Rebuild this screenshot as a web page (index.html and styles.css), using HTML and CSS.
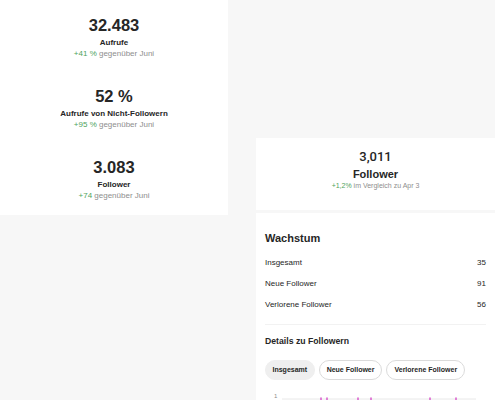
FILE: index.html
```html
<!DOCTYPE html>
<html lang="de">
<head>
<meta charset="utf-8">
<title>Statistiken</title>
<link rel="stylesheet" href="styles.css">
</head>
<body>
<div class="page">
  <section class="left">
    <div class="stat">
      <div class="stat-num">32.483</div>
      <div class="stat-label">Aufrufe</div>
      <div class="stat-delta"><span class="up">+41 %</span> gegenüber Juni</div>
    </div>
    <div class="stat">
      <div class="stat-num">52 %</div>
      <div class="stat-label">Aufrufe von Nicht-Followern</div>
      <div class="stat-delta"><span class="up">+95 %</span> gegenüber Juni</div>
    </div>
    <div class="stat">
      <div class="stat-num">3.083</div>
      <div class="stat-label">Follower</div>
      <div class="stat-delta"><span class="up">+74</span> gegenüber Juni</div>
    </div>
  </section>
  <section class="right">
    <div class="summary">
      <div class="sum-num">3,011</div>
      <div class="sum-label">Follower</div>
      <div class="sum-delta"><span class="up">+1,2%</span> im Vergleich zu Apr 3</div>
    </div>
    <div class="growth">
      <h2 class="growth-title">Wachstum</h2>
      <div class="rows">
        <div class="row"><span>Insgesamt</span><span>35</span></div>
        <div class="row"><span>Neue Follower</span><span>91</span></div>
        <div class="row"><span>Verlorene Follower</span><span>56</span></div>
      </div>
      <div class="divider"></div>
      <h3 class="details-title">Details zu Followern</h3>
      <div class="pills">
        <span class="pill pill-active">Insgesamt</span>
        <span class="pill">Neue Follower</span>
        <span class="pill">Verlorene Follower</span>
      </div>
      <div class="chart">
        <span class="axis-label">1</span>
        <svg class="chart-svg" width="200" height="7" viewBox="0 0 200 7">
          <line x1="0" y1="6" x2="194" y2="6" stroke="#e8e8e8" stroke-width="1"/>
          <rect x="38" y="4.5" width="2" height="2.5" fill="#e07fd6"/>
          <rect x="44" y="4.5" width="2" height="2.5" fill="#e07fd6"/>
          <rect x="75" y="4.5" width="2" height="2.5" fill="#e07fd6"/>
          <rect x="88" y="4.5" width="2" height="2.5" fill="#e07fd6"/>
          <rect x="147" y="4.5" width="2" height="2.5" fill="#e07fd6"/>
          <rect x="173" y="4.5" width="2" height="2.5" fill="#e07fd6"/>
        </svg>
      </div>
    </div>
  </section>
</div>
</body>
</html>
```
FILE: styles.css
```css
html, body {
  margin: 0;
  padding: 0;
}
body {
  background: #f7f7f7;
  font-family: "Liberation Sans", Arial, sans-serif;
  color: #262626;
  width: 495px;
  height: 400px;
  overflow: hidden;
}
.page {
  display: flex;
  align-items: flex-start;
}
.left {
  width: 228px;
  background: #ffffff;
  box-sizing: border-box;
  padding: 15px 0 14px;
  display: flex;
  flex-direction: column;
  gap: 27px;
  text-align: center;
}
.stat-num {
  font-size: 16.5px;
  font-weight: bold;
  line-height: 20px;
}
.stat-label {
  margin-top: 3px;
  font-size: 8px;
  font-weight: bold;
  line-height: 10px;
}
.stat-delta {
  margin-top: 1px;
  font-size: 8px;
  line-height: 10px;
  color: #8e8e8e;
}
.up {
  color: #4fa35c;
}
.right {
  margin-left: 28px;
  margin-top: 138px;
  width: 239px;
  display: flex;
  flex-direction: column;
  gap: 3px;
}
.summary {
  background: #ffffff;
  height: 72px;
  box-sizing: border-box;
  padding-top: 11px;
  text-align: center;
}
.sum-num {
  font-family: Roboto, "Liberation Sans", sans-serif;
  font-weight: 500;
  font-size: 13px;
  line-height: 16px;
}
.sum-label {
  margin-top: 2px;
  font-size: 11px;
  font-weight: bold;
  line-height: 14px;
}
.sum-delta {
  font-size: 7px;
  line-height: 9px;
  color: #8e8e8e;
}
.growth {
  background: #ffffff;
  box-sizing: border-box;
  padding: 18px 9px 0;
  height: 187px;
  overflow: hidden;
}
.growth-title {
  margin: 0;
  font-size: 11px;
  font-weight: bold;
  line-height: 14px;
}
.rows {
  margin-top: 7px;
}
.row {
  display: flex;
  justify-content: space-between;
  font-size: 8px;
  line-height: 21px;
}
.divider {
  margin-top: 9px;
  height: 1px;
  background: #f2f2f2;
}
.details-title {
  margin: 10px 0 0;
  font-size: 8.7px;
  font-weight: bold;
  line-height: 12px;
}
.pills {
  margin-top: 13px;
  display: flex;
  gap: 4px;
}
.pill {
  height: 20px;
  box-sizing: border-box;
  padding: 0 7px;
  border: 1px solid #dbdbdb;
  border-radius: 10px;
  font-size: 7px;
  font-weight: bold;
  line-height: 18px;
  background: #ffffff;
  white-space: nowrap;
}
.pill-active {
  background: #efefef;
  border-color: #efefef;
  padding: 0 6.5px;
}
.chart {
  margin-top: 13px;
  display: flex;
  align-items: flex-start;
  gap: 5px;
  padding-left: 9px;
}
.axis-label {
  font-size: 6px;
  line-height: 7px;
  color: #8e8e8e;
}
.chart-svg {
  display: block;
}
```
